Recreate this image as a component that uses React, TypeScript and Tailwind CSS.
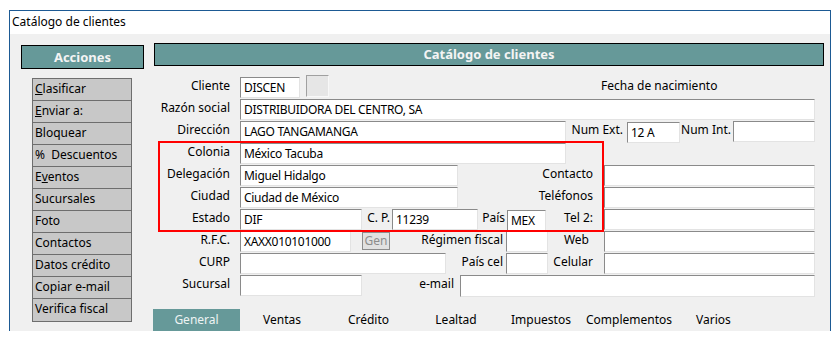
import React from "react";

const acciones: { label: string; u?: number }[] = [
  { label: "Clasificar", u: 0 },
  { label: "Enviar a:", u: 0 },
  { label: "Bloquear" },
  { label: "%  Descuentos" },
  { label: "Eventos", u: 1 },
  { label: "Sucursales" },
  { label: "Foto" },
  { label: "Contactos" },
  { label: "Datos crédito" },
  { label: "Copiar e-mail" },
  { label: "Verifica fiscal" },
];

const tabs = [
  { label: "General", w: "w-[87px]" },
  { label: "Ventas", w: "w-[84px]" },
  { label: "Crédito", w: "w-[89px]" },
  { label: "Lealtad", w: "w-[86px]" },
  { label: "Impuestos", w: "w-[84px]" },
  { label: "Complementos", w: "w-[92px]" },
  { label: "Varios", w: "w-[77px]" },
];

function Field({ w, value, className = "" }: { w: string; value?: string; className?: string }) {
  return (
    <div
      className={`${w} h-[21px] shrink-0 bg-white border border-t-[#8a8a8a] border-l-[#8a8a8a] border-r-[#e3e3e3] border-b-[#e3e3e3] pl-[3px] text-[12px] tracking-[-0.3px] leading-[20px] text-black whitespace-nowrap overflow-hidden ${className}`}
    >
      {value}
    </div>
  );
}

function Label({ w, children, pr = "pr-0" }: { w: string; children: React.ReactNode; pr?: string }) {
  return (
    <div className={`${w} ${pr} shrink-0 text-right text-[12px] leading-[18px] self-start whitespace-nowrap`}>
      {children}
    </div>
  );
}

function Row({ children }: { children: React.ReactNode }) {
  return <div className="flex items-start h-[22px]">{children}</div>;
}

export default function App() {
  return (
    <div
      className="w-[840px] h-[340px] bg-white text-black overflow-hidden"
      style={{ fontFamily: '"Noto Sans", "Open Sans", sans-serif' }}
    >
      <div className="ml-[9px] mt-[10px] w-[822px] h-[321px] border-l border-t border-r border-[#1d5a94] flex flex-col">
        {/* Title bar */}
        <div className="h-[23px] bg-white pl-[2px] text-[12px] leading-[22px]">Catálogo de clientes</div>

        {/* Body */}
        <div className="flex-1 bg-[#f0f0f0] flex">
          {/* Sidebar */}
          <div className="ml-[11px] mt-[11px] w-[123px] shrink-0">
            <div className="h-[24px] bg-[#669999] border border-black text-center text-[13px] font-bold leading-[22px] text-[#f4f4f4]">
              Acciones
            </div>
            <div className="ml-[11px] mt-[9px] w-[100px] border border-[#6e6e6e] bg-[#c8c8c8]">
              {acciones.map((a, i) => (
                <div
                  key={a.label}
                  className={`h-[22px] pl-[2px] text-[12px] leading-[20px] whitespace-pre ${
                    i < acciones.length - 1 ? "border-b border-[#6e6e6e]" : ""
                  }`}
                >
                  {a.u === undefined ? (
                    a.label
                  ) : (
                    <>
                      {a.label.slice(0, a.u)}
                      <span className="underline">{a.label[a.u]}</span>
                      {a.label.slice(a.u + 1)}
                    </>
                  )}
                </div>
              ))}
            </div>
          </div>

          {/* Main */}
          <div className="ml-[10px] mt-[9px] w-[670px] shrink-0">
            <div className="h-[23px] bg-[#669999] border border-black text-center text-[13px] font-bold leading-[21px] text-[#f4f4f4]">
              Catálogo de clientes
            </div>

            <div className="relative mt-[11px]">
              <Row>
                <Label w="w-[76px]">Cliente</Label>
                <div className="w-[10px]" />
                <Field w="w-[60px]" value="DISCEN" />
                <div className="ml-[6px] -mt-[2px] w-[23px] h-[22px] bg-[#e6e6e6] border border-t-[#a0a0a0] border-l-[#a0a0a0] border-r-[#f8f8f8] border-b-[#f8f8f8]" />
                <div className="ml-[272px] text-[12px] leading-[18px]">Fecha de nacimiento</div>
              </Row>
              <Row>
                <Label w="w-[76px]">Razón social</Label>
                <div className="w-[10px]" />
                <Field w="w-[575px]" value="DISTRIBUIDORA DEL CENTRO, SA" />
              </Row>
              <Row>
                <Label w="w-[76px]">Dirección</Label>
                <div className="w-[10px]" />
                <Field w="w-[326px]" value="LAGO TANGAMANGA" />
                <Label w="w-[61px]" pr="pr-[4px]">Num Ext.</Label>
                <Field w="w-[53px]" value="12 A" className="mt-[1px]" />
                <Label w="w-[53px]" pr="pr-[2px]">Num Int.</Label>
                <Field w="w-[82px]" />
              </Row>
              <Row>
                <Label w="w-[76px]">Colonia</Label>
                <div className="w-[10px]" />
                <Field w="w-[326px]" value="México Tacuba" />
              </Row>
              <Row>
                <Label w="w-[76px]">Delegación</Label>
                <div className="w-[10px]" />
                <Field w="w-[218px]" value="Miguel Hidalgo" />
                <Label w="w-[146px]" pr="pr-[11px]">Contacto</Label>
                <Field w="w-[211px]" />
              </Row>
              <Row>
                <Label w="w-[76px]">Ciudad</Label>
                <div className="w-[10px]" />
                <Field w="w-[218px]" value="Ciudad de México" />
                <Label w="w-[146px]" pr="pr-[11px]">Teléfonos</Label>
                <Field w="w-[211px]" />
              </Row>
              <Row>
                <Label w="w-[76px]">Estado</Label>
                <div className="w-[10px]" />
                <Field w="w-[122px]" value="DIF" />
                <Label w="w-[30px]" pr="pr-[2px]">C. P.</Label>
                <Field w="w-[86px]" value="11239" />
                <Label w="w-[29px]" pr="pr-[2px]">País</Label>
                <Field w="w-[39px]" value="MEX" className="mt-[1px]" />
                <Label w="w-[58px]" pr="pr-[11px]">Tel 2:</Label>
                <Field w="w-[211px]" />
              </Row>
              <Row>
                <Label w="w-[76px]">R.F.C.</Label>
                <div className="w-[10px]" />
                <Field w="w-[111px]" value="XAXX010101000" />
                <div className="ml-[11px] mt-[1px] w-[28px] h-[18px] shrink-0 bg-[#e1e1e1] border border-[#8c8c8c] text-center text-[12px] leading-[15px] text-[#8c8c8c]">
                  Gen
                </div>
                <Label w="w-[116px]" pr="pr-[3px]">Régimen fiscal</Label>
                <Field w="w-[42px]" />
                <Label w="w-[56px]" pr="pr-[15px]">Web</Label>
                <Field w="w-[211px]" />
              </Row>
              <Row>
                <Label w="w-[76px]">CURP</Label>
                <div className="w-[10px]" />
                <Field w="w-[206px]" />
                <Label w="w-[60px]" pr="pr-[3px]">País cel</Label>
                <Field w="w-[42px]" />
                <Label w="w-[56px]" pr="pr-[11px]">Celular</Label>
                <Field w="w-[211px]" />
              </Row>
              <Row>
                <Label w="w-[76px]">Sucursal</Label>
                <div className="w-[10px]" />
                <Field w="w-[122px]" />
                <Label w="w-[98px]" pr="pr-[6px]">e-mail</Label>
                <Field w="w-[355px]" className="h-[22px]" />
              </Row>

              {/* highlight */}
              <div className="absolute left-[4px] top-[64px] w-[446px] h-[91px] border-2 border-[#ff0000] pointer-events-none" />
            </div>

            {/* Tabs */}
            <div className="mt-[12px] -ml-[1px] flex">
              {tabs.map((t, i) => (
                <div
                  key={t.label}
                  className={`${t.w} h-[22px] text-center text-[12px] leading-[22px] ${
                    i === 0 ? "bg-[#669999] text-[#eef4f4]" : "text-black"
                  }`}
                >
                  {t.label}
                </div>
              ))}
            </div>
          </div>
        </div>
      </div>
    </div>
  );
}
